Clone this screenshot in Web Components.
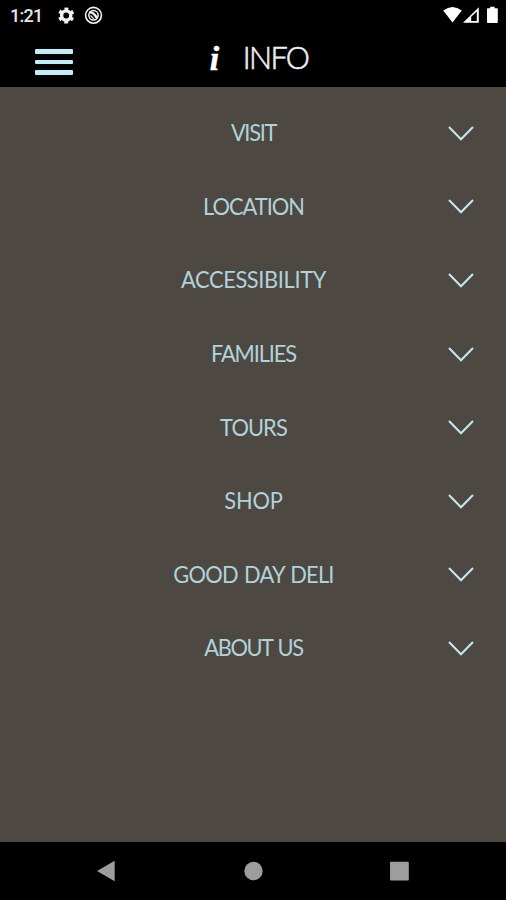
<!DOCTYPE html>
<html lang="en">
<head>
<meta charset="utf-8">
<meta name="viewport" content="width=device-width, initial-scale=1">
<title>Info</title>
<style>
  html, body {
    height: 100%;
    margin: 0;
    background: #000;
  }
</style>
</head>
<body>
<info-app></info-app>

<script>
class StatusBar extends HTMLElement {
  constructor() {
    super();
    this.attachShadow({ mode: "open" });
  }

  connectedCallback() {
    this.shadowRoot.innerHTML = `
      <style>
        :host {
          display: flex;
          justify-content: space-between;
          height: 32px;
          box-sizing: border-box;
          padding: 0 8px 0 10px;
          color: #e6e6e6;
          background: #000;
          font: 500 18px/32px Roboto, sans-serif;
        }
        div { display: flex; }
        svg { display: block; }
        span { width: 47px; letter-spacing: -0.7px; }
      </style>
      <div>
        <span><slot></slot></span>
        <svg width="48" height="32" viewBox="57 0 48 32">
          <g fill="none" stroke="#f4f4f4">
            <circle cx="66.2" cy="15.5" r="4.6" stroke-width="3.4"/>
            <circle cx="66.2" cy="15.5" r="6.6" stroke-width="3" stroke-dasharray="3.6 3.31" stroke-dashoffset="1.8" transform="rotate(30 66.2 15.5)"/>
            <circle cx="93.5" cy="15.3" r="7.9" stroke-width="1.6"/>
            <circle cx="93.5" cy="15.3" r="4.7" stroke-width="1.5"/>
            <path d="M89.4 12.2q4.2-.4 7.6 6" stroke-width="2.4"/>
            <path d="M90.5 15.5l3.4 3.4" stroke-width="1.1"/>
          </g>
        </svg>
      </div>
      <svg width="56" height="32" viewBox="442 0 56 32" fill="#fff">
        <path d="M443.2 10.6Q452.5 3.6 461.8 10.6L452.5 22.4Z"/>
        <path fill-rule="evenodd" d="M463 22.7L478.8 7.3V22.7ZM471.2 16.8V21H476.8V11.6Z"/>
        <path d="M487.8 8.2h2.4V6.8h4.4v1.4h2.4q.8 0 .8.9v12.8q0 1-.8 1h-9.2q-.8 0-.8-1V9.1q0-.9.8-.9z"/>
      </svg>
    `;
  }
}
customElements.define("status-bar", StatusBar);

class AppHeader extends HTMLElement {
  constructor() {
    super();
    this.attachShadow({ mode: "open" });
  }

  connectedCallback() {
    this.shadowRoot.innerHTML = `
      <style>
        :host {
          display: grid;
          grid-template-columns: 72px 1fr 72px;
          height: 54.5px;
          color: #fff;
          background: #000;
        }
        .menu {
          display: flex;
          flex-direction: column;
          gap: 6px;
          padding: 17px 0 0 34.5px;
        }
        .menu i {
          width: 38px;
          height: 4.5px;
          border-radius: 1px;
          background: #c1edf6;
        }
        .title {
          display: flex;
          justify-content: center;
          padding-left: 12px;
        }
        em {
          width: 33px;
          font: italic bold 34px/53px "Liberation Serif", serif;
          -webkit-text-stroke: 0.5px #fff;
        }
        span {
          font: 300 30.5px/50px Lato, sans-serif;
          letter-spacing: -1.6px;
          color: #eee;
          -webkit-text-stroke: 0.6px #eee;
        }
      </style>
      <div class="menu"><i></i><i></i><i></i></div>
      <div class="title"><em>i</em><span><slot></slot></span></div>
    `;
  }
}
customElements.define("app-header", AppHeader);

class InfoRow extends HTMLElement {
  constructor() {
    super();
    this.attachShadow({ mode: "open" });
  }

  connectedCallback() {
    const tracking = this.getAttribute("tracking") || "0";

    this.shadowRoot.innerHTML = `
      <style>
        :host {
          display: grid;
          grid-template-columns: 90px 1fr 90px;
          align-items: center;
          height: 73.6px;
          color: #b0d2da;
          font: 400 23px/30px Lato, sans-serif;
        }
        .label {
          grid-column: 2;
          text-align: center;
          white-space: nowrap;
          letter-spacing: ${tracking}px;
          word-spacing: 1.5px;
          padding: 0 0 1px 1px;
          transform: scaleX(0.95);
        }
        svg {
          display: block;
          justify-self: center;
        }
      </style>
      <div class="label"><slot></slot></div>
      <svg width="28" height="18" viewBox="0 0 28 18">
        <path d="M2 3L14 15.2L26 3" fill="none" stroke="#c1e8f0" stroke-width="2.1"/>
      </svg>
    `;
  }
}
customElements.define("info-row", InfoRow);

class NavBar extends HTMLElement {
  constructor() {
    super();
    this.attachShadow({ mode: "open" });
  }

  connectedCallback() {
    this.shadowRoot.innerHTML = `
      <style>
        :host {
          display: flex;
          justify-content: space-between;
          align-items: center;
          height: 58px;
          box-sizing: border-box;
          padding: 0 96px;
          background: #000;
        }
        svg { display: block; fill: #9d9d9d; }
      </style>
      <svg width="20" height="22"><path d="M1 11L18.7 .8V21.2Z"/></svg>
      <svg width="20" height="22"><circle cx="10.5" cy="11" r="9.2"/></svg>
      <svg width="20" height="22"><rect x="0" y="1.8" width="18.8" height="18.6" rx="1"/></svg>
    `;
  }
}
customElements.define("nav-bar", NavBar);

class InfoApp extends HTMLElement {
  constructor() {
    super();
    this.attachShadow({ mode: "open" });
  }

  connectedCallback() {
    this.shadowRoot.innerHTML = `
      <style>
        :host {
          display: flex;
          flex-direction: column;
          height: 100vh;
        }
        main {
          flex: 1;
          padding-top: 9.5px;
          background: #4d4841;
        }
      </style>
      <status-bar>1:21</status-bar>
      <app-header>INFO</app-header>
      <main>
        <info-row tracking="-1.4">VISIT</info-row>
        <info-row tracking="-1.04">LOCATION</info-row>
        <info-row tracking="-0.4">ACCESSIBILITY</info-row>
        <info-row tracking="-1.2">FAMILIES</info-row>
        <info-row tracking="-0.97">TOURS</info-row>
        <info-row tracking="-0.2">SHOP</info-row>
        <info-row tracking="-0.8">GOOD DAY DELI</info-row>
        <info-row tracking="-1.5">ABOUT US</info-row>
      </main>
      <nav-bar></nav-bar>
    `;
  }
}
customElements.define("info-app", InfoApp);
</script>
</body>
</html>
